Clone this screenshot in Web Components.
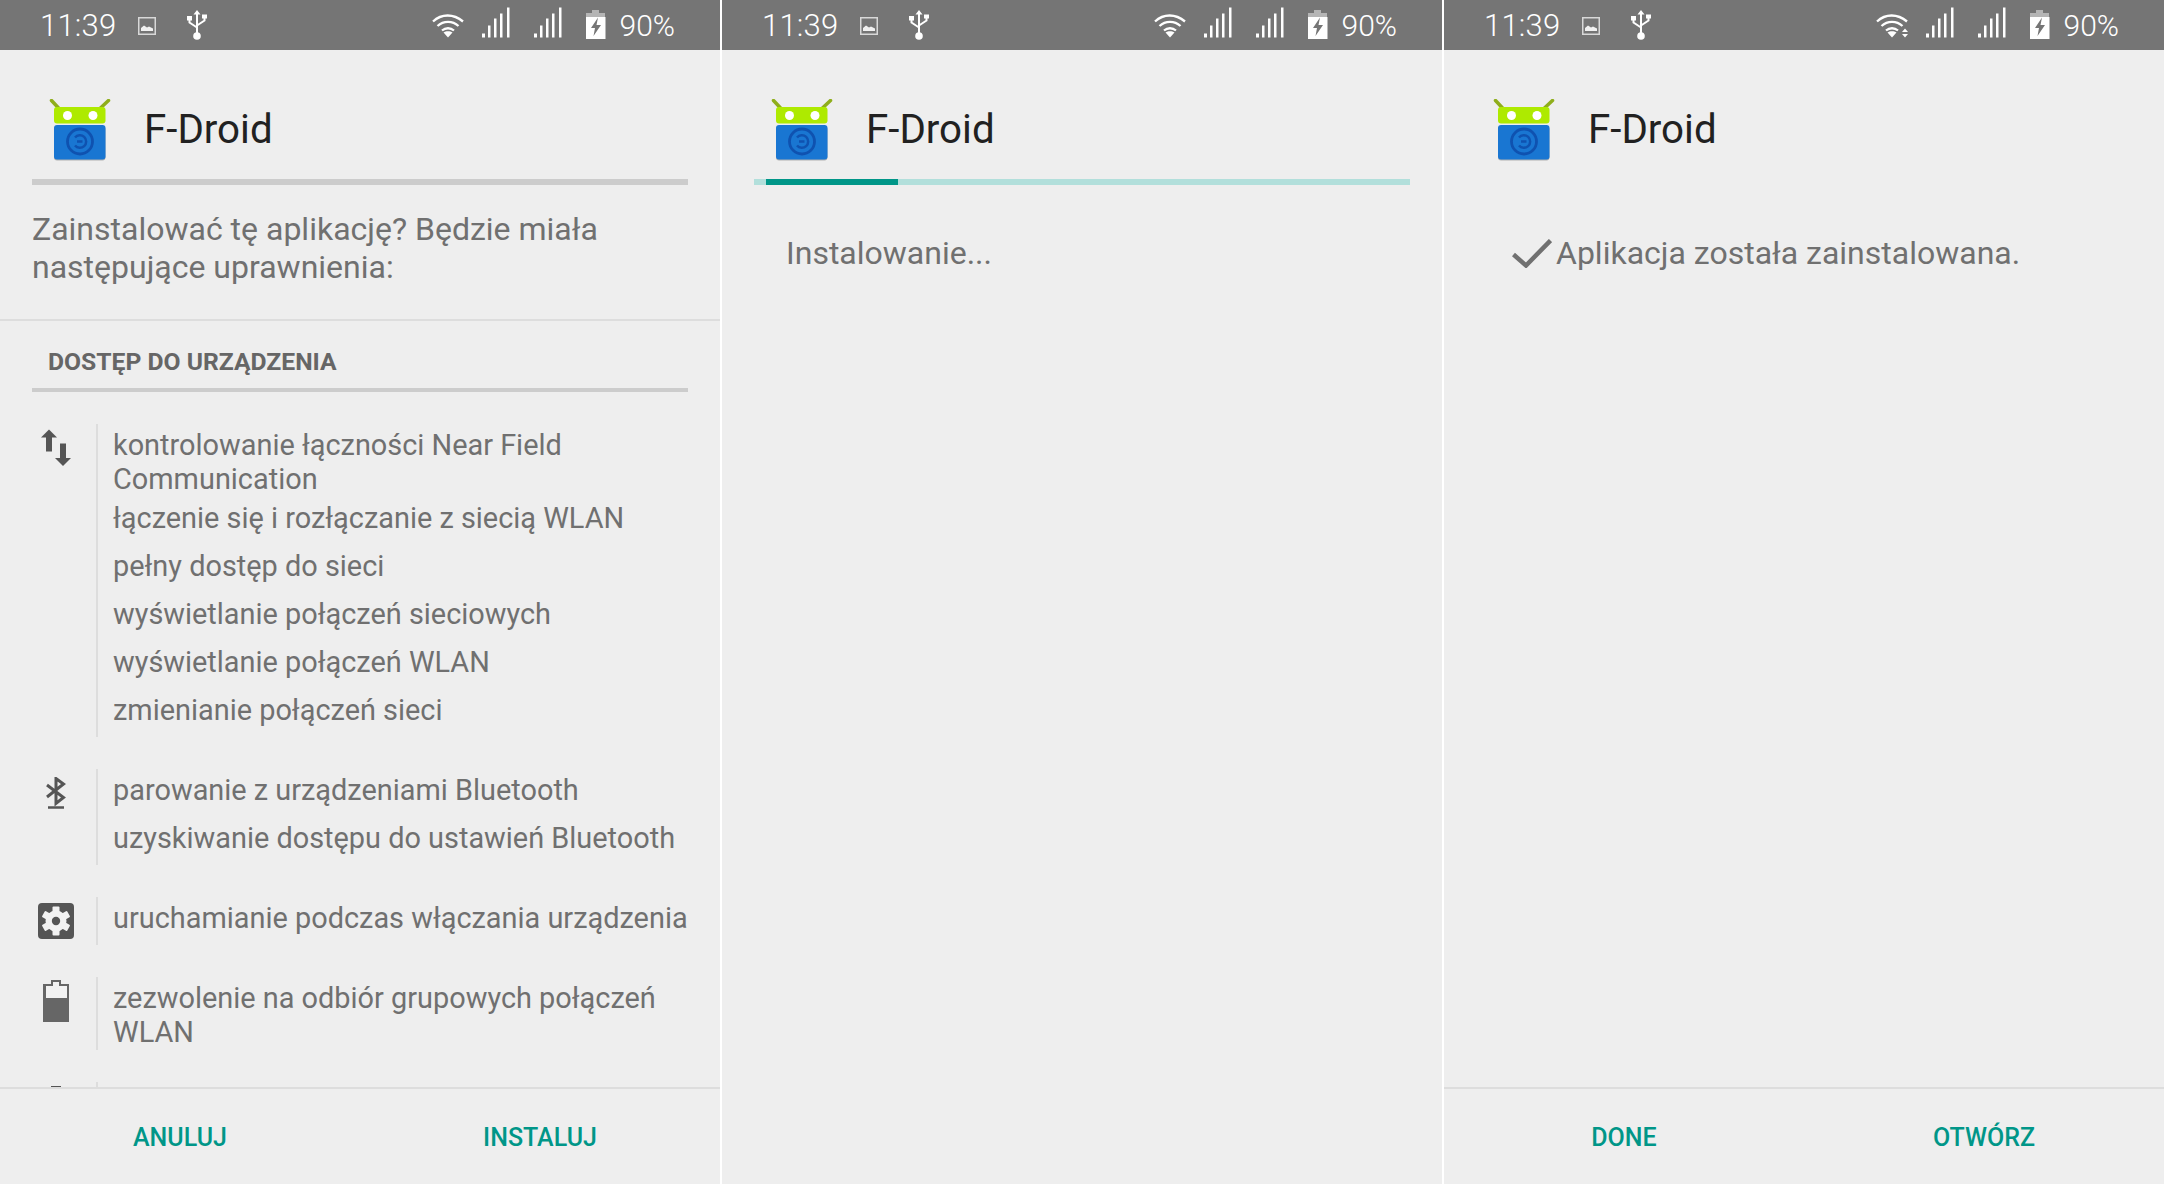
<!DOCTYPE html>
<html lang="pl">
<head>
<meta charset="utf-8">
<title>F-Droid</title>
<style>
html,body{margin:0;padding:0;background:#fff;overflow:hidden}
body{width:2164px;height:1184px;display:flex;gap:2px;font-family:Roboto,"Liberation Sans",sans-serif;color:#707070}
</style>
</head>
<body>
<fd-screen>
  <fd-status></fd-status>
  <fd-header bar="plain"></fd-header>
  <fd-prompt>Zainstalować tę aplikację? Będzie miała następujące uprawnienia:</fd-prompt>
  <fd-perms>
    <fd-section>DOSTĘP DO URZĄDZENIA</fd-section>
    <fd-group icon="arrows">
      <fd-perm>kontrolowanie łączności Near Field Communication</fd-perm>
      <fd-perm>łączenie się i rozłączanie z siecią WLAN</fd-perm>
      <fd-perm>pełny dostęp do sieci</fd-perm>
      <fd-perm>wyświetlanie połączeń sieciowych</fd-perm>
      <fd-perm>wyświetlanie połączeń WLAN</fd-perm>
      <fd-perm>zmienianie połączeń sieci</fd-perm>
    </fd-group>
    <fd-group icon="bluetooth">
      <fd-perm>parowanie z urządzeniami Bluetooth</fd-perm>
      <fd-perm>uzyskiwanie dostępu do ustawień Bluetooth</fd-perm>
    </fd-group>
    <fd-group icon="gear">
      <fd-perm>uruchamianie podczas włączania urządzenia</fd-perm>
    </fd-group>
    <fd-group icon="battery">
      <fd-perm>zezwolenie na odbiór grupowych połączeń WLAN</fd-perm>
    </fd-group>
    <fd-group icon="stub"></fd-group>
  </fd-perms>
  <fd-footer><fd-action>ANULUJ</fd-action><fd-action>INSTALUJ</fd-action></fd-footer>
</fd-screen>
<fd-screen>
  <fd-status></fd-status>
  <fd-header bar="progress"></fd-header>
  <fd-message kind="progress">Instalowanie...</fd-message>
  <fd-footer></fd-footer>
</fd-screen>
<fd-screen>
  <fd-status wifi-activity></fd-status>
  <fd-header></fd-header>
  <fd-message kind="done">Aplikacja została zainstalowana.</fd-message>
  <fd-footer><fd-action>DONE</fd-action><fd-action>OTWÓRZ</fd-action></fd-footer>
</fd-screen>

<script>
function shadow(el, html){ el.attachShadow({mode:'open'}).innerHTML = html; }

var SIGNAL = '<svg width="28" height="31" viewBox="0 0 28 31"><path fill="#fff" d="M0 26.5h3v4H0zM6 18.5h2.500v12H6zM12 11.500h2.500v19H12zM18 6.500h2.500v24H18zM25 .5h2.500v30H25z"/></svg>';

var ICONS = {
  arrows:'<svg width="30" height="38" viewBox="0 0 30 38" style="margin-top:5px"><path fill="#555" d="M8 .5l8 8h-5V22.500H5V8.500H0z"/><path fill="#555" d="M19 14.500h6V29h5l-8 8-8-8h5z"/></svg>',
  bluetooth:'<svg width="20" height="32" viewBox="0 0 20 32" style="margin-top:8px"><path fill="none" stroke="#555" stroke-width="3" d="M1 8l16.500 12.500-7.500 6V1.500l7.500 5.500L1 20"/><path fill="none" stroke="#555" stroke-width="2.500" d="M2 30.500h16"/></svg>',
  gear:'<svg width="36" height="36" viewBox="0 0 36 36" style="margin-top:6px"><rect width="36" height="36" rx="4" fill="#555"/><g transform="translate(18 18)"><circle r="10.500" fill="#f2f2f2"/><g fill="#f2f2f2"><rect x="-3.500" y="-14.500" width="7" height="29" rx="1"/><rect x="-3.500" y="-14.500" width="7" height="29" rx="1" transform="rotate(60)"/><rect x="-3.500" y="-14.500" width="7" height="29" rx="1" transform="rotate(120)"/></g><circle r="4.200" fill="#555"/></g></svg>',
  battery:'<svg width="26" height="42" viewBox="0 0 26 42" style="margin-top:3px"><path fill="#666" d="M8 0h10v4h8v38H0V4h8z"/><path fill="#f2f2f2" d="M10 2h6v4h8v12H3V6h7z"/></svg>',
  stub:'<svg width="10" height="2" viewBox="0 0 10 2" style="margin-top:4px"><rect width="10" height="2" fill="#555"/></svg>'
};

customElements.define('fd-screen', class extends HTMLElement{
  constructor(){super();shadow(this,'<style>:host{display:flex;flex-direction:column;width:720px;height:1184px;background:#eee;overflow:hidden}</style><slot></slot>');}
});

customElements.define('fd-status', class extends HTMLElement{
  constructor(){super();
    var arrows = this.hasAttribute('wifi-activity')
      ? '<path fill="#fff" d="M29 14.500l3 3.500h-6zM26 20h6l-3 3.500z"/>' : '';
    shadow(this,`<style>
      :host{display:flex;align-items:center;flex:none;height:50px;background:#757575;color:#fff;padding:0 45px 0 40px;font:300 30px/50px Roboto,sans-serif;box-sizing:border-box}
      svg{display:block;flex:none}
      .time{width:75px;font-size:31px;white-space:nowrap;letter-spacing:.2px;margin-top:1px}
      .img{margin-left:23px;margin-top:1px}
      .usb{margin-left:31px}
      .wifi{margin-left:auto;margin-top:1px}
      .s1{margin-left:17px;margin-top:-6px}
      .s2{margin-left:24px;margin-top:-6px}
      .bat{margin-left:24px;margin-top:-1px}
      .pct{margin-left:14px;margin-top:2px}
    </style>
    <span class="time">11:39</span>
    <svg class="img" width="18" height="18" viewBox="0 0 18 18"><rect x=".75" y=".75" width="16.500" height="16.500" fill="none" stroke="#d8d8d8" stroke-width="1.500"/><path fill="#f0f0f0" d="M3 14V11l3-2.500 3 2 2-1 4 2V14z"/></svg>
    <svg class="usb" width="20" height="30" viewBox="0 0 20 30"><g fill="none" stroke="#fff" stroke-width="2"><path d="M10 3v22"/><path d="M2.500 8v4.500l7.500 5"/><path d="M17.500 7v3.500l-7.500 5"/></g><path fill="#fff" d="M10 0l3.500 4.500h-7zM0 6h5v4.500H0zM15 4.500h5v4h-5z"/><circle cx="10" cy="26" r="3.800" fill="#fff"/></svg>
    <svg class="wifi" width="33" height="24" viewBox="0 0 33 24"><g fill="none" stroke="#fff" stroke-width="2.300"><path d="M1 7.500c8.500-8 20.500-8 30 0"/><path d="M5.500 12c6-5.500 15-5.500 21 0"/><path d="M10 16.500c3.500-3 8.500-3 12 0"/></g><path fill="#fff" d="M11.500 18.500c2.500-1.800 6.500-1.800 9 0L16 23.500z"/>${arrows}</svg>
    <span class="s1">${SIGNAL}</span>
    <span class="s2">${SIGNAL}</span>
    <svg class="bat" width="20" height="29" viewBox="0 0 20 29"><path fill="#b5b5b5" d="M6 0h7v3h6v5H0V3h6z"/><path fill="#fff" d="M0 7h19.500v22H0z"/><path fill="#757575" d="M12 7.500L5 18h4l-1.500 8L15 15h-4.500z"/></svg>
    <span class="pct">90%</span>`);
  }
});

customElements.define('fd-header', class extends HTMLElement{
  constructor(){super();
    var b = this.getAttribute('bar');
    var bar = b==='plain' ? '<div class="bar plain"></div>' : b==='progress' ? '<div class="bar track"><div class="fill"></div></div>' : '<div class="bar"></div>';
    shadow(this,`<style>
      :host{display:block;flex:none;padding:49px 32px 0}
      .row{display:flex;align-items:center;gap:33px;padding-left:17px;height:62px;margin-bottom:18px}
      svg{display:block;flex:none}
      .name{font:400 40.300px/48px Roboto,sans-serif;color:#212121}
      .bar{height:6px}
      .plain{background:#ccc}
      .track{background:#b2dfdb;padding-left:12px}
      .fill{width:132px;height:6px;background:#009688}
    </style>
    <div class="row">
      <svg width="62" height="62" viewBox="0 0 62 62">
        <path d="M9.500 9L2.500 1.500M51.500 9L59.500 1.500" stroke="#8fae1b" stroke-width="3.500" stroke-linecap="round" fill="none"/>
        <rect x="5" y="8" width="51.500" height="16.500" rx="3" fill="#aeea00"/>
        <circle cx="18.500" cy="16.500" r="4.500" fill="#fff"/><circle cx="44" cy="16.500" r="4.500" fill="#fff"/>
        <rect x="5" y="27.500" width="51.500" height="34" rx="3" fill="#b0b0b0"/>
        <rect x="5" y="26" width="51.500" height="34.500" rx="3" fill="#1976d2"/>
        <circle cx="31" cy="42.500" r="12.500" fill="none" stroke="#0f52b0" stroke-width="2.800"/>
        <path d="M26 38.500a6.300 6.300 0 1 1 0 8" fill="none" stroke="#0f52b0" stroke-width="2.500"/>
        <path d="M28 42.500h5.500" stroke="#0f52b0" stroke-width="2.500"/>
      </svg>
      <span class="name">F-Droid</span>
    </div>${bar}`);
  }
});

customElements.define('fd-prompt', class extends HTMLElement{
  constructor(){super();shadow(this,`<style>
    :host{display:block;flex:none;padding:25px 32px 33px;border-bottom:2px solid #ddd;font:400 32px/38px Roboto,sans-serif;color:#707070}
  </style><slot></slot>`);}
});

customElements.define('fd-perms', class extends HTMLElement{
  constructor(){super();shadow(this,`<style>
    :host{display:block;flex:1 1 0;min-height:0;overflow:hidden}
  </style><slot></slot>`);}
});

customElements.define('fd-section', class extends HTMLElement{
  constructor(){super();shadow(this,`<style>
    :host{display:block;margin:0 32px 32px;padding:27px 16px 12px;border-bottom:4px solid #ccc;font:700 24.700px/28px Roboto,sans-serif;color:#666}
  </style><slot></slot>`);}
});

customElements.define('fd-group', class extends HTMLElement{
  constructor(){super();
    shadow(this,`<style>
      :host{display:flex;margin-bottom:32px;min-height:40px}
      .icon{flex:none;width:80px;margin-left:16px;display:flex;justify-content:center;align-items:flex-start}
      .icon svg{display:block}
      .list{flex:1;min-width:0;border-left:2px solid #ddd;padding:0 24px 0 15px}
    </style><div class="icon">${ICONS[this.getAttribute('icon')]||''}</div><div class="list"><slot></slot></div>`);
  }
});

customElements.define('fd-perm', class extends HTMLElement{
  constructor(){super();shadow(this,`<style>
    :host{display:block;min-height:48px;padding:4px 0 1px;box-sizing:border-box;font:400 28.900px/34px Roboto,sans-serif;color:#707070}
  </style><slot></slot>`);}
});

customElements.define('fd-message', class extends HTMLElement{
  constructor(){super();
    var done = this.getAttribute('kind')==='done';
    shadow(this,`<style>
      :host{display:flex;flex:1 1 0;align-items:flex-start;gap:4px;padding:49px 0 0 ${done?'68px':'64px'};font:400 32px/38px Roboto,sans-serif;color:#707070}
      svg{display:block;flex:none;margin-top:5px}
      span{display:block}
    </style>${done?'<svg width="40" height="29" viewBox="0 0 40 29"><path fill="none" stroke="#707070" stroke-width="4.500" d="M1.500 15.500L14 26.500 38.500 1.500"/></svg>':''}<span><slot></slot></span>`);
  }
});

customElements.define('fd-footer', class extends HTMLElement{
  constructor(){super();shadow(this,`<style>
    :host{display:flex;flex:none;height:97px;box-sizing:border-box;border-top:2px solid #ddd;padding-top:2px}
    :host(:empty){border-top-color:transparent}
  </style><slot></slot>`);}
});

customElements.define('fd-action', class extends HTMLElement{
  constructor(){super();shadow(this,`<style>
    :host{display:flex;flex:1;align-items:center;justify-content:center;font:500 25px/30px Roboto,sans-serif;color:#009688}
  </style><slot></slot>`);}
});
</script>
</body>
</html>
